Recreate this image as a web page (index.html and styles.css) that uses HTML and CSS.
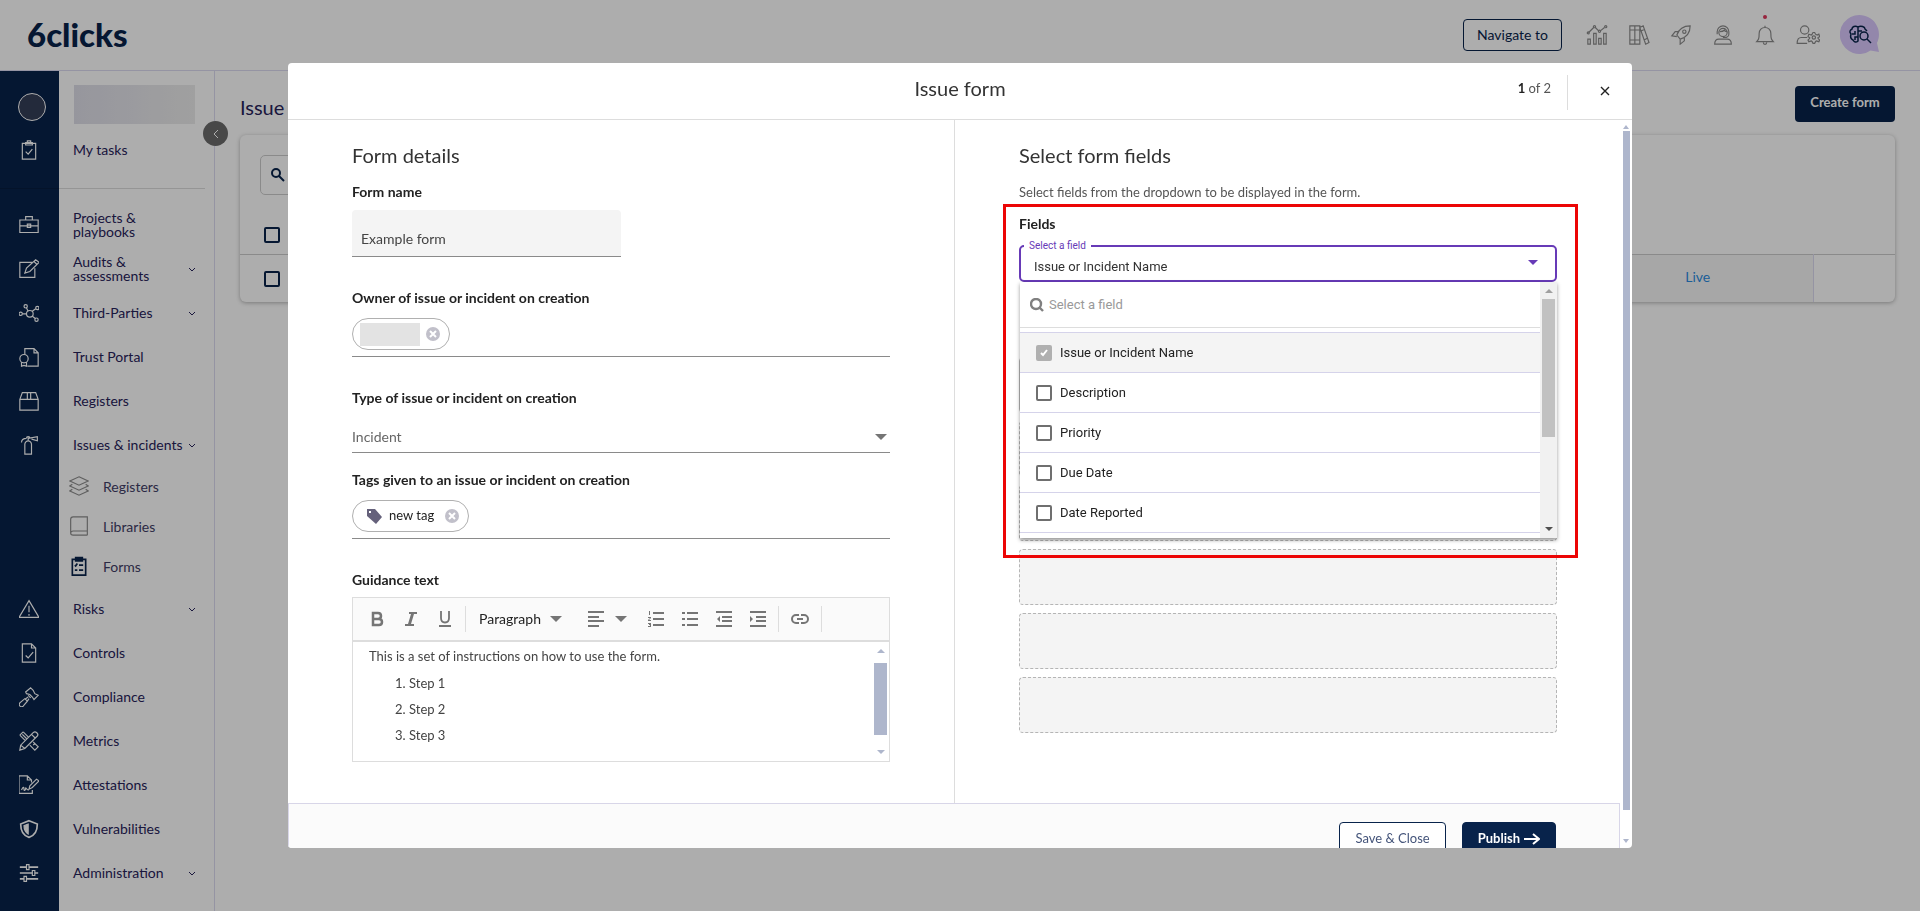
FILE: index.html
```html
<!DOCTYPE html>
<html lang="en">
<head>
  <meta charset="UTF-8">
  <meta name="viewport" content="width=device-width, initial-scale=1.0">
  <title>6clicks - Issue form</title>
  <link rel="stylesheet" href="styles.css">
</head>
<body>
  <header class="topbar">
    <a class="logo" href="#">6clicks</a>
    <div class="topbar-actions">
      <button class="btn-navigate" type="button">Navigate to</button>
      <button class="icon-btn" type="button" aria-label="Analytics">
        <svg class="icon" viewBox="0 0 24 24"><path d="M1 17h3v6H1zM8 10h3v13H8zM14 16h3v7h-3zM20 10h3v13h-3zM2 9l6-6M10 3l4 4M16 7l5-4"/><circle cx="1.500" cy="9.500" r="1.200"/><circle cx="9" cy="2" r="1.300"/><circle cx="15" cy="7.500" r="1.300"/><circle cx="22.500" cy="2" r="1.300"/></svg>
      </button>
      <button class="icon-btn" type="button" aria-label="Library">
        <svg class="icon" viewBox="0 0 24 24"><path d="M1 1h6v22H1zM7 1h6v22H7zM1 6h12M1 18h12M13 3l4-2 7 20-4 2zM15 7l4-2M18 18l4-2"/></svg>
      </button>
      <button class="icon-btn" type="button" aria-label="Get started">
        <svg class="icon" viewBox="0 0 24 24"><path d="M7 12c2-6 7-11 16-11 0 9-5 14-12 16zM9 8H5l-4 5 6 1M16 14v5l-5 4v-6M7 12l4 5"/><circle cx="16" cy="8" r="2"/></svg>
      </button>
      <button class="icon-btn" type="button" aria-label="Support">
        <svg class="icon" viewBox="0 0 24 24"><circle cx="12" cy="9" r="5"/><path d="M5 11V8a7 7 0 0 1 14 0v3c0 2-2 4-5 4h-2M2 23c0-4 2-6 5-6h10c3 0 5 2 5 6zM8 8c3 0 5-1 6-2 0 1 1 2 3 2"/></svg>
      </button>
      <button class="icon-btn" type="button" aria-label="Notifications">
        <svg class="icon" viewBox="0 0 24 24"><path d="M2 20c2-2 3-3 3-10 0-4 3-7 7-7s7 3 7 7c0 7 1 8 3 10zM12 3V1M10 21c0 3 4 3 4 0"/></svg>
        <span class="alert-dot"></span>
      </button>
      <button class="icon-btn wide" type="button" aria-label="Account settings">
        <svg class="icon" viewBox="0 0 28 24"><circle cx="10" cy="6" r="5"/><path d="M13 22H1c0-5 2-7 5-7h7"/><circle cx="21" cy="15" r="2"/><path d="M20 9h2l1 2 2 1 2-1 1 3-2 1v1l2 2-1 2-3-1-1 1-1 2h-2l-1-2-1-1-3 1-1-2 2-2v-1l-2-1 1-3 3 1 1-1z"/></svg>
      </button>
      <button class="assistant-btn" type="button" aria-label="Assistant">
        <svg viewBox="0 0 40 40"><path d="M19.500 0a19.500 19.500 0 1 0 11 35.500L39 37l-2-9A19.500 19.500 0 0 0 19.500 0z" fill="#d9c8fc"/><g fill="none" stroke="#08234b" stroke-width="1.500"><path d="M18 12c-3-2-6 0-6 2-2 1-3 3-1 5-1 3 0 5 2 6 1 2 3 3 5 1zM18 12c3-2 7 0 7 2l2 2M18 12v14M12 19h3v-3M18 16h4M15 25v-3h3"/><circle cx="24" cy="21" r="4"/><path d="M27 24l4 4"/></g></svg>
      </button>
    </div>
  </header>

  <div class="layout">
    <nav class="sidebar">
      <div class="account">
        <span class="rail"><span class="avatar"></span></span>
        <span class="account-name"></span>
      </div>
      <a class="nav-item tasks" href="#">
        <span class="rail"><svg class="icon" viewBox="0 0 24 24"><path d="M4 4h16v19H4zM8 3h8v3H8zM10 3V1h4v2M8 14l3 3 5-6"/></svg></span>
        <span class="nav-label">My tasks</span>
      </a>
      <hr class="nav-divider">
      <a class="nav-item" href="#">
        <span class="rail"><svg class="icon" viewBox="0 0 24 24"><path d="M1 6h22v15H1zM8 6V2h8v4M1 13h22M10 11h4v4h-4z"/></svg></span>
        <span class="nav-label">Projects &amp; playbooks</span>
      </a>
      <a class="nav-item" href="#">
        <span class="rail"><svg class="icon" viewBox="0 0 24 24"><path d="M16 4H1v18h18V11M7 17l2-6L20 1l4 3L13 15zM18 3l4 4"/></svg></span>
        <span class="nav-label">Audits &amp; assessments</span>
        <svg class="chevron" viewBox="0 0 8 5"><path d="M1 1l3 3 3-3"/></svg>
      </a>
      <a class="nav-item" href="#">
        <span class="rail"><svg class="icon" viewBox="0 0 24 24"><circle cx="13" cy="13" r="4"/><circle cx="2" cy="13" r="2"/><circle cx="8" cy="4" r="2"/><circle cx="22" cy="6" r="2"/><circle cx="21" cy="20" r="2"/><path d="M4 13h5M9 6l2 4M16 10l4-3M16 16l4 3"/></svg></span>
        <span class="nav-label">Third-Parties</span>
        <svg class="chevron" viewBox="0 0 8 5"><path d="M1 1l3 3 3-3"/></svg>
      </a>
      <a class="nav-item" href="#">
        <span class="rail"><svg class="icon" viewBox="0 0 24 24"><path d="M7 9V2h11l5 5v16H10M18 2v5h5"/><circle cx="6" cy="14" r="5"/><path d="M3 18v5l3-1 3 1v-5"/></svg></span>
        <span class="nav-label">Trust Portal</span>
      </a>
      <a class="nav-item" href="#">
        <span class="rail"><svg class="icon" viewBox="0 0 24 24"><path d="M1 10l3-8h16l3 8v13H1zM1 10h22M10 2v8M14 2v8"/></svg></span>
        <span class="nav-label">Registers</span>
      </a>
      <a class="nav-item" href="#">
        <span class="rail"><svg class="icon" viewBox="0 0 24 24"><path d="M7 23V11c0-2 2-4 4-4s4 2 4 4v12zM11 7V3M9 4a2 2 0 1 1 4 0M11 4l11-2v5l-7-2M9 4c-4 0-6 2-6 5"/></svg></span>
        <span class="nav-label">Issues &amp; incidents</span>
        <svg class="chevron" viewBox="0 0 8 5"><path d="M1 1l3 3 3-3"/></svg>
      </a>
      <a class="sub-item" href="#">
        <svg class="icon" viewBox="0 0 24 24"><path d="M12 1l11 5-11 5L1 6zM4 10l-3 2 11 5 11-5-3-2M4 16l-3 2 11 5 11-5-3-2"/></svg>
        Registers
      </a>
      <a class="sub-item" href="#">
        <svg class="icon" viewBox="0 0 24 24"><path d="M22 18H5c-4 0-4 5 0 5h17M22 23V1H5C3 1 2 2 2 4v16"/></svg>
        Libraries
      </a>
      <a class="sub-item current" href="#">
        <svg class="icon" viewBox="0 0 24 24"><path d="M4 4h16v19H4zM8 2h8v4H8zM7 11l1 1 2-3M12 11h5M7 17h3M12 17h5"/></svg>
        Forms
      </a>
      <a class="nav-item" href="#">
        <span class="rail"><svg class="icon" viewBox="0 0 24 24"><path d="M12 2l12 20H0zM12 8v8M12 18v2"/></svg></span>
        <span class="nav-label">Risks</span>
        <svg class="chevron" viewBox="0 0 8 5"><path d="M1 1l3 3 3-3"/></svg>
      </a>
      <a class="nav-item" href="#">
        <span class="rail"><svg class="icon" viewBox="0 0 24 24"><path d="M4 1h11l5 5v17H4zM15 1v5h5M8 15l3 3 6-7"/></svg></span>
        <span class="nav-label">Controls</span>
      </a>
      <a class="nav-item" href="#">
        <span class="rail"><svg class="icon" viewBox="0 0 24 24"><path d="M14 1l3 3 2 4 4 2-5 5-2-3-3-3-4-1-1-2zM11 10l3 3M11 12l-3 2M10 17l2-3M7 14l3 3-5 6c-3 2-6-1-4-4z"/></svg></span>
        <span class="nav-label">Compliance</span>
      </a>
      <a class="nav-item" href="#">
        <span class="rail"><svg class="icon" viewBox="0 0 24 24"><path d="M1 23l1-6L17 2c3-3 7 2 5 4L7 21zM15 4l5 5M9 9L4 4M5 1l6 6M1 5l6 6M5 1L1 5M17 13l6 6-4 4-6-6M17 17l2-2M2 17l5 4"/></svg></span>
        <span class="nav-label">Metrics</span>
      </a>
      <a class="nav-item" href="#">
        <span class="rail"><svg class="icon" viewBox="0 0 24 24"><path d="M15 9V6l-5-5H0v21h16v-4M10 1v5h5M12 17l1-4 8-8 3 2-8 8zM3 18c2-4 3-4 3-1s2 1 2-1 1 2 4 2"/></svg></span>
        <span class="nav-label">Attestations</span>
      </a>
      <a class="nav-item" href="#">
        <span class="rail"><svg class="icon" viewBox="0 0 24 24"><path stroke-width="2" d="M12 2l10 4c0 8-3 14-10 16C5 20 2 14 2 6z"/><path fill="currentColor" d="M11 6v12c-3-2-5-5-5-10z"/></svg></span>
        <span class="nav-label">Vulnerabilities</span>
      </a>
      <a class="nav-item" href="#">
        <span class="rail"><svg class="icon" viewBox="0 0 24 24"><path d="M1 5h8M12 5h11M1 12h15M19 12h4M1 19h5M9 19h14" stroke-width="2"/><path d="M9 2h3v6H9zM16 9h3v6h-3zM6 16h3v6H6z"/></svg></span>
        <span class="nav-label">Administration</span>
        <svg class="chevron" viewBox="0 0 8 5"><path d="M1 1l3 3 3-3"/></svg>
      </a>
      <button class="collapse-btn" type="button" aria-label="Collapse menu">
        <svg viewBox="0 0 6 10"><path d="M5 1L1 5l4 4"/></svg>
      </button>
    </nav>

    <main class="page">
      <div class="page-head">
        <h1>Issue</h1>
        <button class="btn-create" type="button">Create form</button>
      </div>
      <section class="card">
        <div class="card-search">
          <svg viewBox="0 0 14 14"><circle cx="5" cy="5" r="4"/><path d="M8 8l5 5"/></svg>
        </div>
        <table class="forms-table">
          <thead>
            <tr>
              <th><input type="checkbox" aria-label="Select all"></th>
              <th></th>
              <th class="status"></th>
              <th class="actions"></th>
            </tr>
          </thead>
          <tbody>
            <tr>
              <td><input type="checkbox" aria-label="Select row"></td>
              <td></td>
              <td class="status">Live</td>
              <td class="actions"></td>
            </tr>
          </tbody>
        </table>
      </section>
    </main>
  </div>

  <div class="backdrop">
    <div class="modal" role="dialog" aria-labelledby="modal-title">
      <div class="modal-head">
        <h2 id="modal-title">Issue form</h2>
        <div class="modal-tools">
          <span class="step"><b>1</b> of 2</span>
          <button class="close-btn" type="button" aria-label="Close">
            <svg viewBox="0 0 10 10"><path d="M1 1l8 8M9 1L1 9"/></svg>
          </button>
        </div>
      </div>

      <div class="modal-body">
        <div class="modal-scroll">
          <div class="columns">
            <section class="column">
              <h3>Form details</h3>

              <label class="field-label" for="form-name">Form name</label>
              <input class="text-input" id="form-name" type="text" value="Example form">

              <span class="field-label spaced">Owner of issue or incident on creation</span>
              <div class="chip-field">
                <span class="chip">
                  <span class="chip-name"></span>
                  <button class="chip-remove" type="button" aria-label="Remove owner"><svg viewBox="0 0 8 8"><path d="M1 1l6 6M7 1L1 7"/></svg></button>
                </span>
              </div>

              <label class="field-label spaced" for="issue-type">Type of issue or incident on creation</label>
              <div class="select-line">
                <select id="issue-type"><option>Incident</option></select>
                <svg class="caret" viewBox="0 0 12 6"><path d="M0 0h12L6 6z"/></svg>
              </div>

              <span class="field-label tight">Tags given to an issue or incident on creation</span>
              <div class="chip-field">
                <span class="chip">
                  <svg class="tag-icon" viewBox="0 0 16 16"><path fill-rule="evenodd" d="M1 1h8l7 8-6 7-9-8zM3 3v2h2V3z"/></svg>
                  <span class="chip-text">new tag</span>
                  <button class="chip-remove" type="button" aria-label="Remove new tag"><svg viewBox="0 0 8 8"><path d="M1 1l6 6M7 1L1 7"/></svg></button>
                </span>
              </div>

              <span class="field-label spaced" id="guidance-label">Guidance text</span>
              <div class="editor">
                <div class="toolbar">
                  <button type="button" aria-label="Bold"><svg viewBox="0 0 16 16"><path fill="none" stroke="currentColor" stroke-width="2.500" d="M4 2h5c4 0 4 6 0 6H4zM4 8h6c4 0 4 6 0 6H4z"/></svg></button>
                  <button type="button" aria-label="Italic"><svg viewBox="0 0 16 16"><path d="M6 1h8v2h-3L8 13h3v2H2v-2h3L8 3H6z"/></svg></button>
                  <button type="button" aria-label="Underline"><svg viewBox="0 0 16 16"><path fill="none" stroke="currentColor" stroke-width="1.800" d="M4 0v7c0 6 8 6 8 0V0M2 15h12"/></svg></button>
                  <span class="tool-divider"></span>
                  <div class="format">
                    <select aria-label="Text format"><option>Paragraph</option></select>
                    <svg class="caret" viewBox="0 0 12 6"><path d="M0 0h12L6 6z"/></svg>
                  </div>
                  <button class="align" type="button" aria-label="Align">
                    <svg viewBox="0 0 16 16"><path d="M0 0h16v2H0zM0 5h11v2H0zM0 9h16v2H0zM0 14h11v2H0z"/></svg>
                    <svg class="caret" viewBox="0 0 12 6"><path d="M0 0h12L6 6z"/></svg>
                  </button>
                  <button type="button" aria-label="Numbered list"><svg viewBox="0 0 16 16"><path d="M5 1h11v2H5zM5 7h11v2H5zM5 13h11v2H5zM1 0h1v4H1zM0 6h3v1L1 9h2v1H0V9l2-2H0zM0 12h3v4H0v-1h2v-1H1v-1H0z"/></svg></button>
                  <button type="button" aria-label="Bulleted list"><svg viewBox="0 0 16 16"><path d="M5 1h11v2H5zM5 7h11v2H5zM5 13h11v2H5zM0 1h3v2H0zM0 7h3v2H0zM0 13h3v2H0z"/></svg></button>
                  <button type="button" aria-label="Outdent"><svg viewBox="0 0 16 16"><path d="M0 0h16v2H0zM6 5h10v2H6zM6 9h10v2H6zM0 14h16v2H0zM4 5v6L1 8z"/></svg></button>
                  <button type="button" aria-label="Indent"><svg viewBox="0 0 16 16"><path d="M0 0h16v2H0zM6 5h10v2H6zM6 9h10v2H6zM0 14h16v2H0zM0 5v6l3-3z"/></svg></button>
                  <span class="tool-divider"></span>
                  <button class="link" type="button" aria-label="Link"><svg viewBox="0 0 18 10"><path fill="none" stroke="currentColor" stroke-width="2" d="M8 1H5a4 4 0 0 0 0 8h3M10 1h3a4 4 0 0 1 0 8h-3M6 5h6"/></svg></button>
                  <span class="tool-divider"></span>
                </div>
                <div class="editor-body">
                  <div class="editor-text" contenteditable="true" role="textbox" aria-labelledby="guidance-label">
                    <p>This is a set of instructions on how to use the form.</p>
                    <ol>
                      <li>Step 1</li>
                      <li>Step 2</li>
                      <li>Step 3</li>
                    </ol>
                  </div>
                  <div class="editor-scrollbar">
                    <svg viewBox="0 0 8 4"><path d="M0 4l4-4 4 4z"/></svg>
                    <span></span>
                    <svg viewBox="0 0 8 4"><path d="M0 0h8L4 4z"/></svg>
                  </div>
                </div>
              </div>
            </section>

            <section class="column">
              <h3>Select form fields</h3>
              <p class="hint">Select fields from the dropdown to be displayed in the form.</p>

              <div class="field-picker">
                <span class="field-label">Fields</span>
                <div class="select-outline">
                  <label for="field-select">Select a field</label>
                  <select id="field-select"><option>Issue or Incident Name</option></select>
                  <svg class="caret" viewBox="0 0 10 5"><path d="M0 0h10L5 5z"/></svg>

                  <div class="dropdown">
                    <div class="dropdown-list">
                      <div class="dropdown-search">
                        <svg viewBox="0 0 14 14"><circle cx="6" cy="6" r="5"/><path d="M9 9l4 4"/></svg>
                        <input type="text" placeholder="Select a field" aria-label="Search fields">
                      </div>
                      <label class="option selected"><input type="checkbox" checked disabled>Issue or Incident Name</label>
                      <label class="option"><input type="checkbox">Description</label>
                      <label class="option"><input type="checkbox">Priority</label>
                      <label class="option"><input type="checkbox">Due Date</label>
                      <label class="option"><input type="checkbox">Date Reported</label>
                    </div>
                    <div class="dropdown-scrollbar">
                      <svg viewBox="0 0 8 4"><path d="M0 4l4-4 4 4z"/></svg>
                      <span></span>
                      <svg class="down" viewBox="0 0 8 4"><path d="M0 0h8L4 4z"/></svg>
                    </div>
                  </div>
                </div>
                <div class="highlight"></div>
              </div>

              <div class="slots">
                <div class="slot filled"></div>
                <div class="slot"></div>
                <div class="slot"></div>
                <div class="slot"></div>
                <div class="slot"></div>
                <div class="slot"></div>
              </div>
            </section>
          </div>

          <div class="modal-foot">
            <button class="btn-save" type="button">Save &amp; Close</button>
            <button class="btn-publish" type="button">Publish
              <svg viewBox="0 0 16 12"><path d="M0 6h15M9 1l6 5-6 5"/></svg>
            </button>
          </div>
        </div>
        <div class="modal-scrollbar">
          <svg viewBox="0 0 6 4"><path d="M0 4l3-4 3 4z"/></svg>
          <span></span>
          <svg viewBox="0 0 6 4"><path d="M0 0h6L3 4z"/></svg>
        </div>
      </div>
    </div>
  </div>
</body>
</html>
```
FILE: styles.css
```css
* {
  box-sizing: border-box;
}

body {
  margin: 0;
  height: 100vh;
  display: flex;
  flex-direction: column;
  overflow: hidden;
  background-color: #fff;
  color: #27225a;
  font-family: Lato, sans-serif;
  font-size: 14px;
}

a {
  color: inherit;
  text-decoration: none;
}

button, input, select {
  font-family: inherit;
  font-size: 14px;
}

button {
  padding: 0;
  border: none;
  background: none;
  cursor: pointer;
}

select {
  appearance: none;
  padding: 0;
  border: none;
  outline: none;
  background: none;
}

.icon {
  width: 20px;
  height: 20px;
  fill: none;
  stroke: currentColor;
  stroke-width: 1.4;
}

.caret {
  width: 12px;
  height: 6px;
  fill: #757575;
  pointer-events: none;
}

/* Top bar */
.topbar {
  height: 71px;
  flex-shrink: 0;
  display: flex;
  align-items: center;
  justify-content: space-between;
  padding: 0 40px 0 27px;
  border-bottom: 1px solid #dcdaf0;
}

.logo {
  padding-bottom: 2px;
  color: #08234b;
  font-size: 33px;
  font-weight: 900;
}

.topbar-actions {
  display: flex;
  align-items: center;
  gap: 20px;
}

.btn-navigate {
  width: 99px;
  height: 32px;
  padding-bottom: 2px;
  margin-right: 4px;
  border: 1px solid #08234b;
  border-radius: 4px;
  color: #08234b;
}

.icon-btn {
  position: relative;
  display: flex;
  color: #8a8a8a;
}

.icon-btn .icon {
  width: 22px;
}

.icon-btn.wide .icon {
  width: 24px;
}

.alert-dot {
  position: absolute;
  top: -10px;
  left: 9px;
  width: 4px;
  height: 4px;
  border-radius: 50%;
  background-color: #e0355c;
}

.assistant-btn svg {
  display: block;
  width: 40px;
  height: 40px;
}

/* Sidebar */
.layout {
  flex: 1;
  display: flex;
}

.sidebar {
  position: relative;
  width: 215px;
  flex-shrink: 0;
  border-right: 1px solid #dcdaf0;
  background: linear-gradient(to right, #08234b 59px, #fff 59px);
}

.rail {
  width: 59px;
  flex-shrink: 0;
  display: flex;
  justify-content: center;
  padding-right: 2px;
  color: #fff;
}

.account {
  display: flex;
  align-items: center;
  height: 53px;
  padding-top: 14px;
}

.avatar {
  width: 28px;
  height: 28px;
  margin: 4px 0 0 6px;
  border: 1px solid #fff;
  border-radius: 50%;
  background-color: #343e58;
}

.account-name {
  width: 121px;
  height: 39px;
  margin-left: 15px;
  background: linear-gradient(to right, #dedee8, #ececec);
}

.nav-item {
  display: flex;
  align-items: center;
  height: 44px;
  padding-right: 18px;
}

.nav-item.tasks {
  height: 52px;
}

.nav-label {
  flex: 1;
  padding-left: 14px;
  line-height: 14px;
}

.nav-divider {
  height: 1px;
  margin: 12px 9px 14px 0;
  border: none;
  background: linear-gradient(to right, #061c3e 59px, #dcdcdc 59px);
}

.chevron {
  width: 8px;
  height: 5px;
  fill: none;
  stroke: currentColor;
}

.sub-item {
  display: flex;
  align-items: center;
  gap: 14px;
  height: 40px;
  padding: 0 0 2px 69px;
  color: #3f3d66;
}

.sub-item .icon {
  color: #8c8c8c;
}

.sub-item.current .icon {
  color: #08234b;
  stroke-width: 2;
}

.collapse-btn {
  position: absolute;
  top: 50px;
  right: -14px;
  width: 25px;
  height: 25px;
  border-radius: 50%;
  background-color: #6b6b6b;
}

.collapse-btn svg {
  width: 6px;
  height: 10px;
  fill: none;
  stroke: #fff;
}

/* Page behind the dialog */
.page {
  flex: 1;
  padding: 15px 25px;
}

.page-head {
  display: flex;
  align-items: center;
  justify-content: space-between;
}

.page-head h1 {
  margin: 6px 0 0;
  font-size: 20px;
  font-weight: 400;
}

.btn-create {
  width: 100px;
  height: 36px;
  padding-bottom: 4px;
  border-radius: 4px;
  background-color: #08234b;
  color: #fff;
  font-size: 13px;
  font-weight: 700;
}

.card {
  margin-top: 13px;
  border-radius: 6px;
  box-shadow: 0 1px 4px rgba(0, 0, 0, 0.3);
  overflow: hidden;
}

.card-search {
  display: flex;
  align-items: center;
  width: 300px;
  height: 40px;
  margin: 20px;
  padding-left: 10px;
  border: 1px solid #ccc;
  border-radius: 5px;
}

.card-search svg {
  width: 14px;
  height: 14px;
  fill: none;
  stroke: #08234b;
  stroke-width: 2;
}

.forms-table {
  width: 100%;
  border-collapse: collapse;
  table-layout: fixed;
}

.forms-table th {
  height: 39px;
  padding: 2px 24px 0;
  text-align: left;
}

.forms-table td {
  height: 48px;
  padding: 2px 24px 0;
  border-top: 1px solid #ccc;
}

.forms-table input {
  appearance: none;
  display: block;
  width: 16px;
  height: 16px;
  margin: 0;
  border: 2px solid #08234b;
  border-radius: 2px;
}

.forms-table .status {
  width: 230px;
  text-align: center;
}

.forms-table td.status {
  padding: 0 0 4px;
  border-right: 1px solid #dcdaf0;
  background-color: #f7f7f7;
  color: #2b8be0;
}

.forms-table .actions {
  width: 82px;
}

/* Dialog */
.backdrop {
  position: fixed;
  inset: 0;
  display: flex;
  justify-content: center;
  padding: 63px 0;
  background-color: rgba(0, 0, 0, 0.32);
}

.modal {
  width: 70%;
  display: flex;
  flex-direction: column;
  border-radius: 4px;
  background-color: #fff;
  color: #333;
  overflow: hidden;
}

.modal-head {
  display: grid;
  grid-template-columns: 1fr auto 1fr;
  height: 57px;
  flex-shrink: 0;
  border-bottom: 1px solid #ddd;
}

.modal-head h2 {
  grid-column: 2;
  margin: 12px 0 0;
  font-size: 20px;
  font-weight: 400;
  line-height: 26px;
}

.modal-tools {
  display: flex;
  justify-content: flex-end;
  padding: 12px 0 8px;
}

.step {
  padding-right: 16px;
  line-height: 26px;
  color: #555;
  font-size: 13px;
}

.step b {
  color: #222;
}

.close-btn {
  width: 65px;
  height: 35px;
  padding: 0 0 4px 9px;
  border-left: 1px solid #ddd;
}

.close-btn svg {
  width: 10px;
  height: 10px;
  fill: none;
  stroke: #222;
  stroke-width: 1.4;
}

.modal-body {
  flex: 1;
  display: flex;
  min-height: 0;
}

.modal-scroll {
  flex: 1;
  overflow: hidden;
}

.modal-scrollbar {
  width: 12px;
  display: flex;
  flex-direction: column;
  align-items: center;
  padding: 5px 0;
}

.modal-scrollbar svg {
  width: 6px;
  height: 4px;
  fill: #aeb6cc;
}

.modal-scrollbar span {
  flex: 1;
  width: 7px;
  margin: 2px 0 29px;
  background-color: #aeb6cc;
}

.columns {
  display: grid;
  grid-template-columns: 1fr 1fr;
}

.column {
  padding: 23px 64px 41px;
}

.column + .column {
  padding-right: 63px;
  padding-bottom: 70px;
  border-left: 1px solid #ddd;
}

.column h3 {
  margin: 0 0 15px;
  font-size: 20px;
  font-weight: 400;
  line-height: 24px;
}

.field-label {
  display: block;
  margin-bottom: 8px;
  color: #222;
  font-weight: 700;
  line-height: 20px;
}

.field-label.spaced {
  margin: 31px 0 7px;
}

.field-label.tight {
  margin: 17px 0 7px;
}

.text-input {
  display: block;
  width: 50%;
  height: 47px;
  padding: 11px 9px 0;
  border: none;
  border-bottom: 1px solid #8a8a8a;
  border-radius: 4px 4px 0 0;
  background-color: #f4f4f4;
  color: #444;
}

.chip-field {
  padding: 3px 0 6px;
  border-bottom: 1px solid #8a8a8a;
}

.chip {
  display: inline-flex;
  align-items: center;
  gap: 6px;
  height: 32px;
  padding: 0 9px 0 7px;
  border: 1px solid #b0b0b0;
  border-radius: 16px;
  vertical-align: top;
  font-size: 13px;
}

.chip-name {
  width: 60px;
  height: 23px;
  background-color: #e3e3e3;
}

.chip-text {
  padding: 0 5px 2px 1px;
  color: #222;
}

.tag-icon {
  width: 16px;
  height: 16px;
  margin-left: 6px;
  fill: #65617b;
}

.chip-remove {
  display: flex;
  align-items: center;
  justify-content: center;
  width: 14px;
  height: 14px;
  border-radius: 50%;
  background-color: #c1c0ca;
}

.chip-remove svg {
  width: 8px;
  height: 8px;
  fill: none;
  stroke: #fff;
  stroke-width: 2;
}

.select-line {
  display: flex;
  align-items: center;
  height: 38px;
  padding: 6px 3px 0 0;
  border-bottom: 1px solid #8a8a8a;
}

.select-line select {
  flex: 1;
  color: #666;
}

/* Guidance editor */
.editor {
  border: 1px solid #ddd;
}

.toolbar {
  display: flex;
  align-items: center;
  gap: 18px;
  height: 44px;
  padding: 0 0 1px 16px;
  border-bottom: 2px solid #ddd;
  background-color: #fafafa;
  color: #757575;
}

.toolbar button {
  display: flex;
  color: inherit;
}

.toolbar svg {
  width: 16px;
  height: 16px;
  fill: currentColor;
}

.toolbar svg.caret {
  width: 12px;
  height: 6px;
}

.toolbar .link svg {
  width: 18px;
  height: 10px;
}

.tool-divider {
  width: 1px;
  height: 26px;
  margin: 0 -6px;
  background-color: #ddd;
}

.format {
  display: flex;
  align-items: center;
  gap: 9px;
  margin: 0 8px 0 1px;
}

.format select {
  color: #222;
}

.toolbar .align {
  align-items: center;
  gap: 11px;
  margin-right: 3px;
}

.editor-body {
  display: flex;
  height: 119px;
}

.editor-text {
  flex: 1;
  padding: 1px 16px;
  outline: none;
  color: #444;
  font-size: 13px;
  line-height: 26px;
}

.editor-text p {
  margin: 0;
}

.editor-text ol {
  margin: 1px 0 0;
  padding-left: 40px;
}

.editor-scrollbar {
  width: 17px;
  display: flex;
  flex-direction: column;
  align-items: center;
  padding: 7px 2px;
}

.editor-scrollbar svg {
  width: 8px;
  height: 4px;
  fill: #aeb6cc;
}

.editor-scrollbar span {
  width: 13px;
  height: 72px;
  margin: 10px 0 15px;
  background-color: #aeb6cc;
}

/* Field picker */
.hint {
  margin: 0;
  color: #555;
  font-size: 13px;
  line-height: 20px;
}

.field-picker {
  position: relative;
  margin-top: 12px;
}

.field-picker .field-label {
  margin-bottom: 11px;
}

.select-outline {
  position: relative;
  display: flex;
  align-items: center;
  height: 37px;
  padding: 5px 17px 0 13px;
  border: 2px solid #673ab7;
  border-radius: 5px;
  font-family: Roboto, sans-serif;
}

.select-outline > label {
  position: absolute;
  top: -8px;
  left: 3px;
  padding: 0 5px;
  background-color: #fff;
  color: #673ab7;
  font-size: 10px;
  line-height: 14px;
}

.select-outline > select {
  flex: 1;
  color: #333;
  font-size: 13px;
}

.select-outline > .caret {
  width: 10px;
  height: 5px;
  margin-bottom: 8px;
  fill: #673ab7;
}

.dropdown {
  position: absolute;
  z-index: 1;
  top: 35px;
  left: -1px;
  right: -2px;
  display: flex;
  height: 256px;
  background-color: #fff;
  box-shadow: 0 2px 4px rgba(0, 0, 0, 0.4);
}

.dropdown-list {
  flex: 1;
}

.dropdown-search {
  display: flex;
  align-items: center;
  gap: 5px;
  height: 46px;
  margin-bottom: 4px;
  padding: 0 10px;
  border-bottom: 1px solid #ddd;
}

.dropdown-search svg {
  width: 14px;
  height: 14px;
  fill: none;
  stroke: #808080;
  stroke-width: 2.4;
}

.dropdown-search input {
  flex: 1;
  padding: 0;
  border: none;
  outline: none;
  font-size: 13px;
}

.dropdown-search input::placeholder {
  color: #999;
}

.option {
  display: flex;
  align-items: center;
  gap: 8px;
  height: 40px;
  padding-left: 16px;
  border-top: 1px solid #d5d3ea;
  color: #222;
  font-size: 13px;
}

.option:last-child {
  height: 41px;
  border-bottom: 1px solid #d5d3ea;
}

.option.selected {
  background-color: #f4f4f4;
}

.option input {
  appearance: none;
  width: 16px;
  height: 16px;
  margin: 0;
  border: 2px solid #6f6f6f;
  border-radius: 2px;
}

.option input:checked {
  border-color: #b0b0b0;
  background: #b0b0b0 url("data:image/svg+xml,%3Csvg xmlns='http://www.w3.org/2000/svg' viewBox='0 0 12 12'%3E%3Cpath d='M3 6l2 2 4-5' fill='none' stroke='white' stroke-width='2'/%3E%3C/svg%3E");
}

.dropdown-scrollbar {
  width: 17px;
  display: flex;
  flex-direction: column;
  align-items: center;
  padding: 7px 0;
  background-color: #f1f1f1;
}

.dropdown-scrollbar svg {
  width: 8px;
  height: 4px;
  fill: #a0a0a0;
}

.dropdown-scrollbar svg.down {
  margin-top: auto;
  fill: #505050;
}

.dropdown-scrollbar span {
  width: 13px;
  height: 138px;
  margin-top: 6px;
  background-color: #c1c1c1;
}

.highlight {
  position: absolute;
  z-index: 2;
  top: -10px;
  left: -16px;
  right: -21px;
  height: 354px;
  border: 3px solid #ec0505;
  pointer-events: none;
}

.slots {
  display: grid;
  gap: 8px;
  margin-top: 75px;
}

.slot {
  height: 56px;
  border: 1px dashed #b5b5b5;
  border-radius: 4px;
  background-color: #f4f4f4;
}

.slot.filled {
  border-style: solid;
}

.modal-foot {
  display: flex;
  justify-content: flex-end;
  gap: 16px;
  padding: 18px 63px;
  border: 1px solid #d8d6e8;
  background-color: #fbfbfb;
}

.btn-save, .btn-publish {
  height: 36px;
  padding: 0 15px 4px;
  border: 1px solid #08234b;
  border-radius: 4px;
  background-color: #fff;
  color: #44547a;
  font-size: 13px;
}

.btn-publish {
  display: flex;
  align-items: center;
  gap: 4px;
  background-color: #08234b;
  color: #fff;
  font-weight: 700;
}

.btn-publish svg {
  width: 16px;
  height: 12px;
  margin-top: 2px;
  fill: none;
  stroke: #fff;
  stroke-width: 2;
}
```
